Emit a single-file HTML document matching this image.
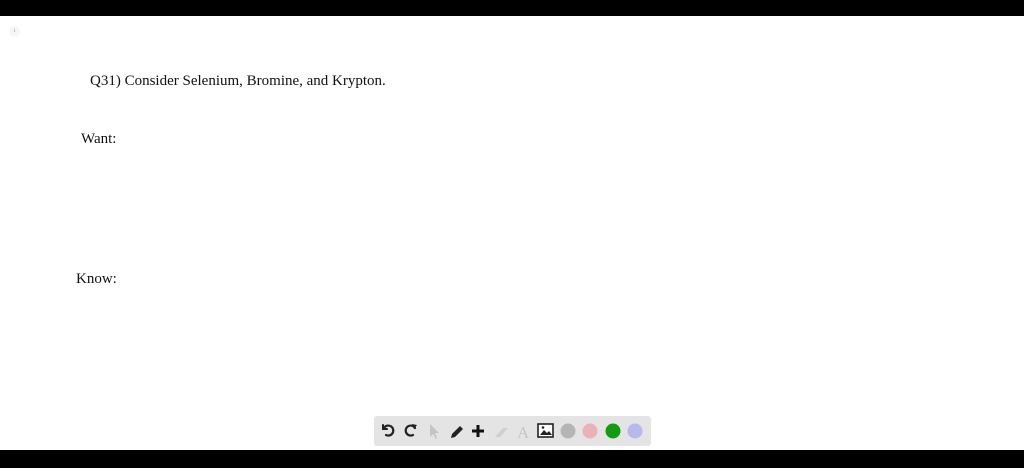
<!DOCTYPE html>
<html><head><meta charset="utf-8"><style>
html,body{margin:0;padding:0;}
body{width:1024px;height:468px;position:relative;background:#fff;overflow:hidden;font-family:"Liberation Serif",serif;color:#111;}
.t{position:absolute;font-size:15px;white-space:nowrap;line-height:18px;}
#top{position:absolute;left:0;top:0;width:1024px;height:16px;background:#000;}
#bot{position:absolute;left:0;top:450px;width:1024px;height:18px;background:#000;}
#tb{position:absolute;left:374px;top:416px;width:277px;height:30px;background:#e4e4e4;border-radius:3px;}
#tb svg{position:absolute;top:0;left:0;}
.pg{position:absolute;left:9px;top:26px;width:11px;height:11px;border-radius:50%;background:#f6f6f6;font-size:5px;color:#999;text-align:center;line-height:11px;}
</style></head><body>
<div id="top"></div>
<div class="pg">1</div>
<div class="t" style="left:90px;top:72px;">Q31) Consider Selenium, Bromine, and Krypton.</div>
<div class="t" style="left:81px;top:130px;">Want:</div>
<div class="t" style="left:76px;top:270px;">Know:</div>
<div id="tb"><svg width="277" height="30" viewBox="0 0 277 30">
<g fill="none" stroke="#222" stroke-width="2.2" stroke-linecap="round">
<path d="M10 12 A5 5 0 1 1 12 19"/><path d="M9 9 L9 13 L13 13" stroke-width="2"/>
<path d="M41 12 A5 5 0 1 0 39 19"/>
</g>
<path d="M38 8 L43 9 L40 13 Z" fill="#222"/>
<path d="M56 8 L56 21 L59 18 L62 23 L63 22 L61 17 L65 17 Z" fill="#c4c4c4"/>
<path d="M77 22 L78 18 L86 10 L89 13 L81 21 Z" fill="#222"/>
<path d="M104 9 V21 M98 15 H110" stroke="#111" stroke-width="3"/>
<path d="M121 21 L129 12 L134 12 L126 21 Z" fill="#cfcfcf"/>
<text x="143" y="22" font-family="Liberation Serif" font-size="17" fill="#c6c6c6">A</text>
<rect x="164" y="8" width="15" height="13" fill="#fff" stroke="#222" stroke-width="1.6"/>
<path d="M166 19 L170 14 L173 17 L175 15 L178 19 Z" fill="#222"/><circle cx="169" cy="11.5" r="1.3" fill="#222"/>
<circle cx="194" cy="15" r="7.5" fill="#b5b5b5"/>
<circle cx="216" cy="15" r="7.5" fill="#ebb2b5"/>
<circle cx="239" cy="15" r="7.5" fill="#109d10"/>
<circle cx="261" cy="15" r="7.5" fill="#b8b8ec"/>
</svg></div>
<div id="bot"></div>
</body></html>
